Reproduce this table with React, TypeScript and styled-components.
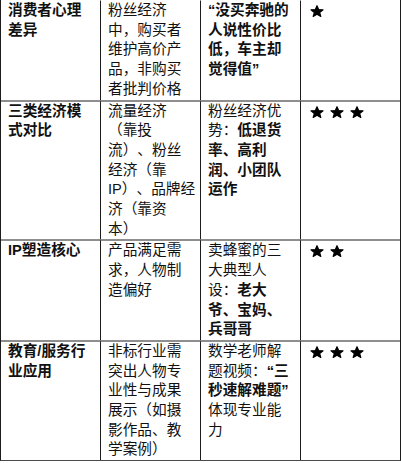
import React from "react";
import styled, { createGlobalStyle } from "styled-components";

const Global = createGlobalStyle`
  html, body { margin: 0; padding: 0; background: #ffffff; }
  body {
    font-family: "Liberation Sans", "Noto Sans CJK SC", sans-serif;
    color: #111111;
  }
`;

const Table = styled.div`
  display: grid;
  grid-template-columns: 99px 100px 100px 100px;
  width: 401px;
  box-sizing: border-box;
  border-left: 1px solid #1c1c1c;
  border-right: 1px solid #1c1c1c;
  border-bottom: 1px solid #4a4a4a;
`;

const Cell = styled.div<{ $first?: boolean; $lead?: boolean; $bold?: boolean }>`
  box-sizing: border-box;
  min-width: 0;
  padding: 0 4.4px 0 7px;
  border-top: ${(p) => (p.$first ? "1px solid transparent" : "2px solid #8e8e8e")};
  border-left: ${(p) => (p.$lead ? "none" : "1px solid #1c1c1c")};
  font-size: 14.667px;
  line-height: 19.7px;
  font-weight: ${(p) => (p.$bold ? 700 : 400)};
  text-spacing-trim: space-all;
  word-break: normal;
  line-break: strict;
`;

const Strong = styled.b`
  font-weight: 700;
`;

const Stars = styled.div`
  display: flex;
  gap: 6px;
  padding: 4px 0 0 2px;
`;

const StarIcon = styled.svg`
  display: block;
  width: 14px;
  height: 12px;
`;

function Star() {
  return (
    <StarIcon viewBox="0 0 24 21" aria-label="★">
      <polygon
        points="12,1.2 14.9,8 22.6,8.3 16.6,13.1 18.7,20 12,16 5.3,20 7.4,13.1 1.4,8.3 9.1,8"
        fill="#000"
        stroke="#000"
        strokeWidth="2"
        strokeLinejoin="round"
      />
    </StarIcon>
  );
}

type Part = { t: string; b?: boolean };
type Row = { topic: string; desc: string; example: Part[]; stars: number };

const rows: Row[] = [
  {
    topic: "消费者心理差异",
    desc: "粉丝经济中，购买者维护高价产品，非购买者批判价格",
    example: [{ t: "“没买奔驰的人说性价比低，车主却觉得值”", b: true }],
    stars: 1,
  },
  {
    topic: "三类经济模式对比",
    desc: "流量经济（靠投流）、粉丝经济（靠IP）、品牌经济（靠资本）",
    example: [
      { t: "粉丝经济优势：" },
      { t: "低退货率、高利润、小团队运作", b: true },
    ],
    stars: 3,
  },
  {
    topic: "IP塑造核心",
    desc: "产品满足需求，人物制造偏好",
    example: [
      { t: "卖蜂蜜的三大典型人设：" },
      { t: "老大爷、宝妈、兵哥哥", b: true },
    ],
    stars: 2,
  },
  {
    topic: "教育/服务行业应用",
    desc: "非标行业需突出人物专业性与成果展示（如摄影作品、教学案例）",
    example: [
      { t: "数学老师解题视频：" },
      { t: "“三秒速解难题”", b: true },
      { t: "体现专业能力" },
    ],
    stars: 3,
  },
];

export default function App() {
  return (
    <>
      <Global />
      <Table>
        {rows.map((r, i) => (
          <React.Fragment key={r.topic}>
            <Cell $first={i === 0} $lead $bold>
              {r.topic}
            </Cell>
            <Cell $first={i === 0}>{r.desc}</Cell>
            <Cell $first={i === 0}>
              {r.example.map((p, j) => (
                <React.Fragment key={j}>
                  {p.b ? <Strong>{p.t}</Strong> : <span>{p.t}</span>}
                  <wbr />
                </React.Fragment>
              ))}
            </Cell>
            <Cell $first={i === 0}>
              <Stars>
                {Array.from({ length: r.stars }).map((_, k) => (
                  <Star key={k} />
                ))}
              </Stars>
            </Cell>
          </React.Fragment>
        ))}
      </Table>
    </>
  );
}
